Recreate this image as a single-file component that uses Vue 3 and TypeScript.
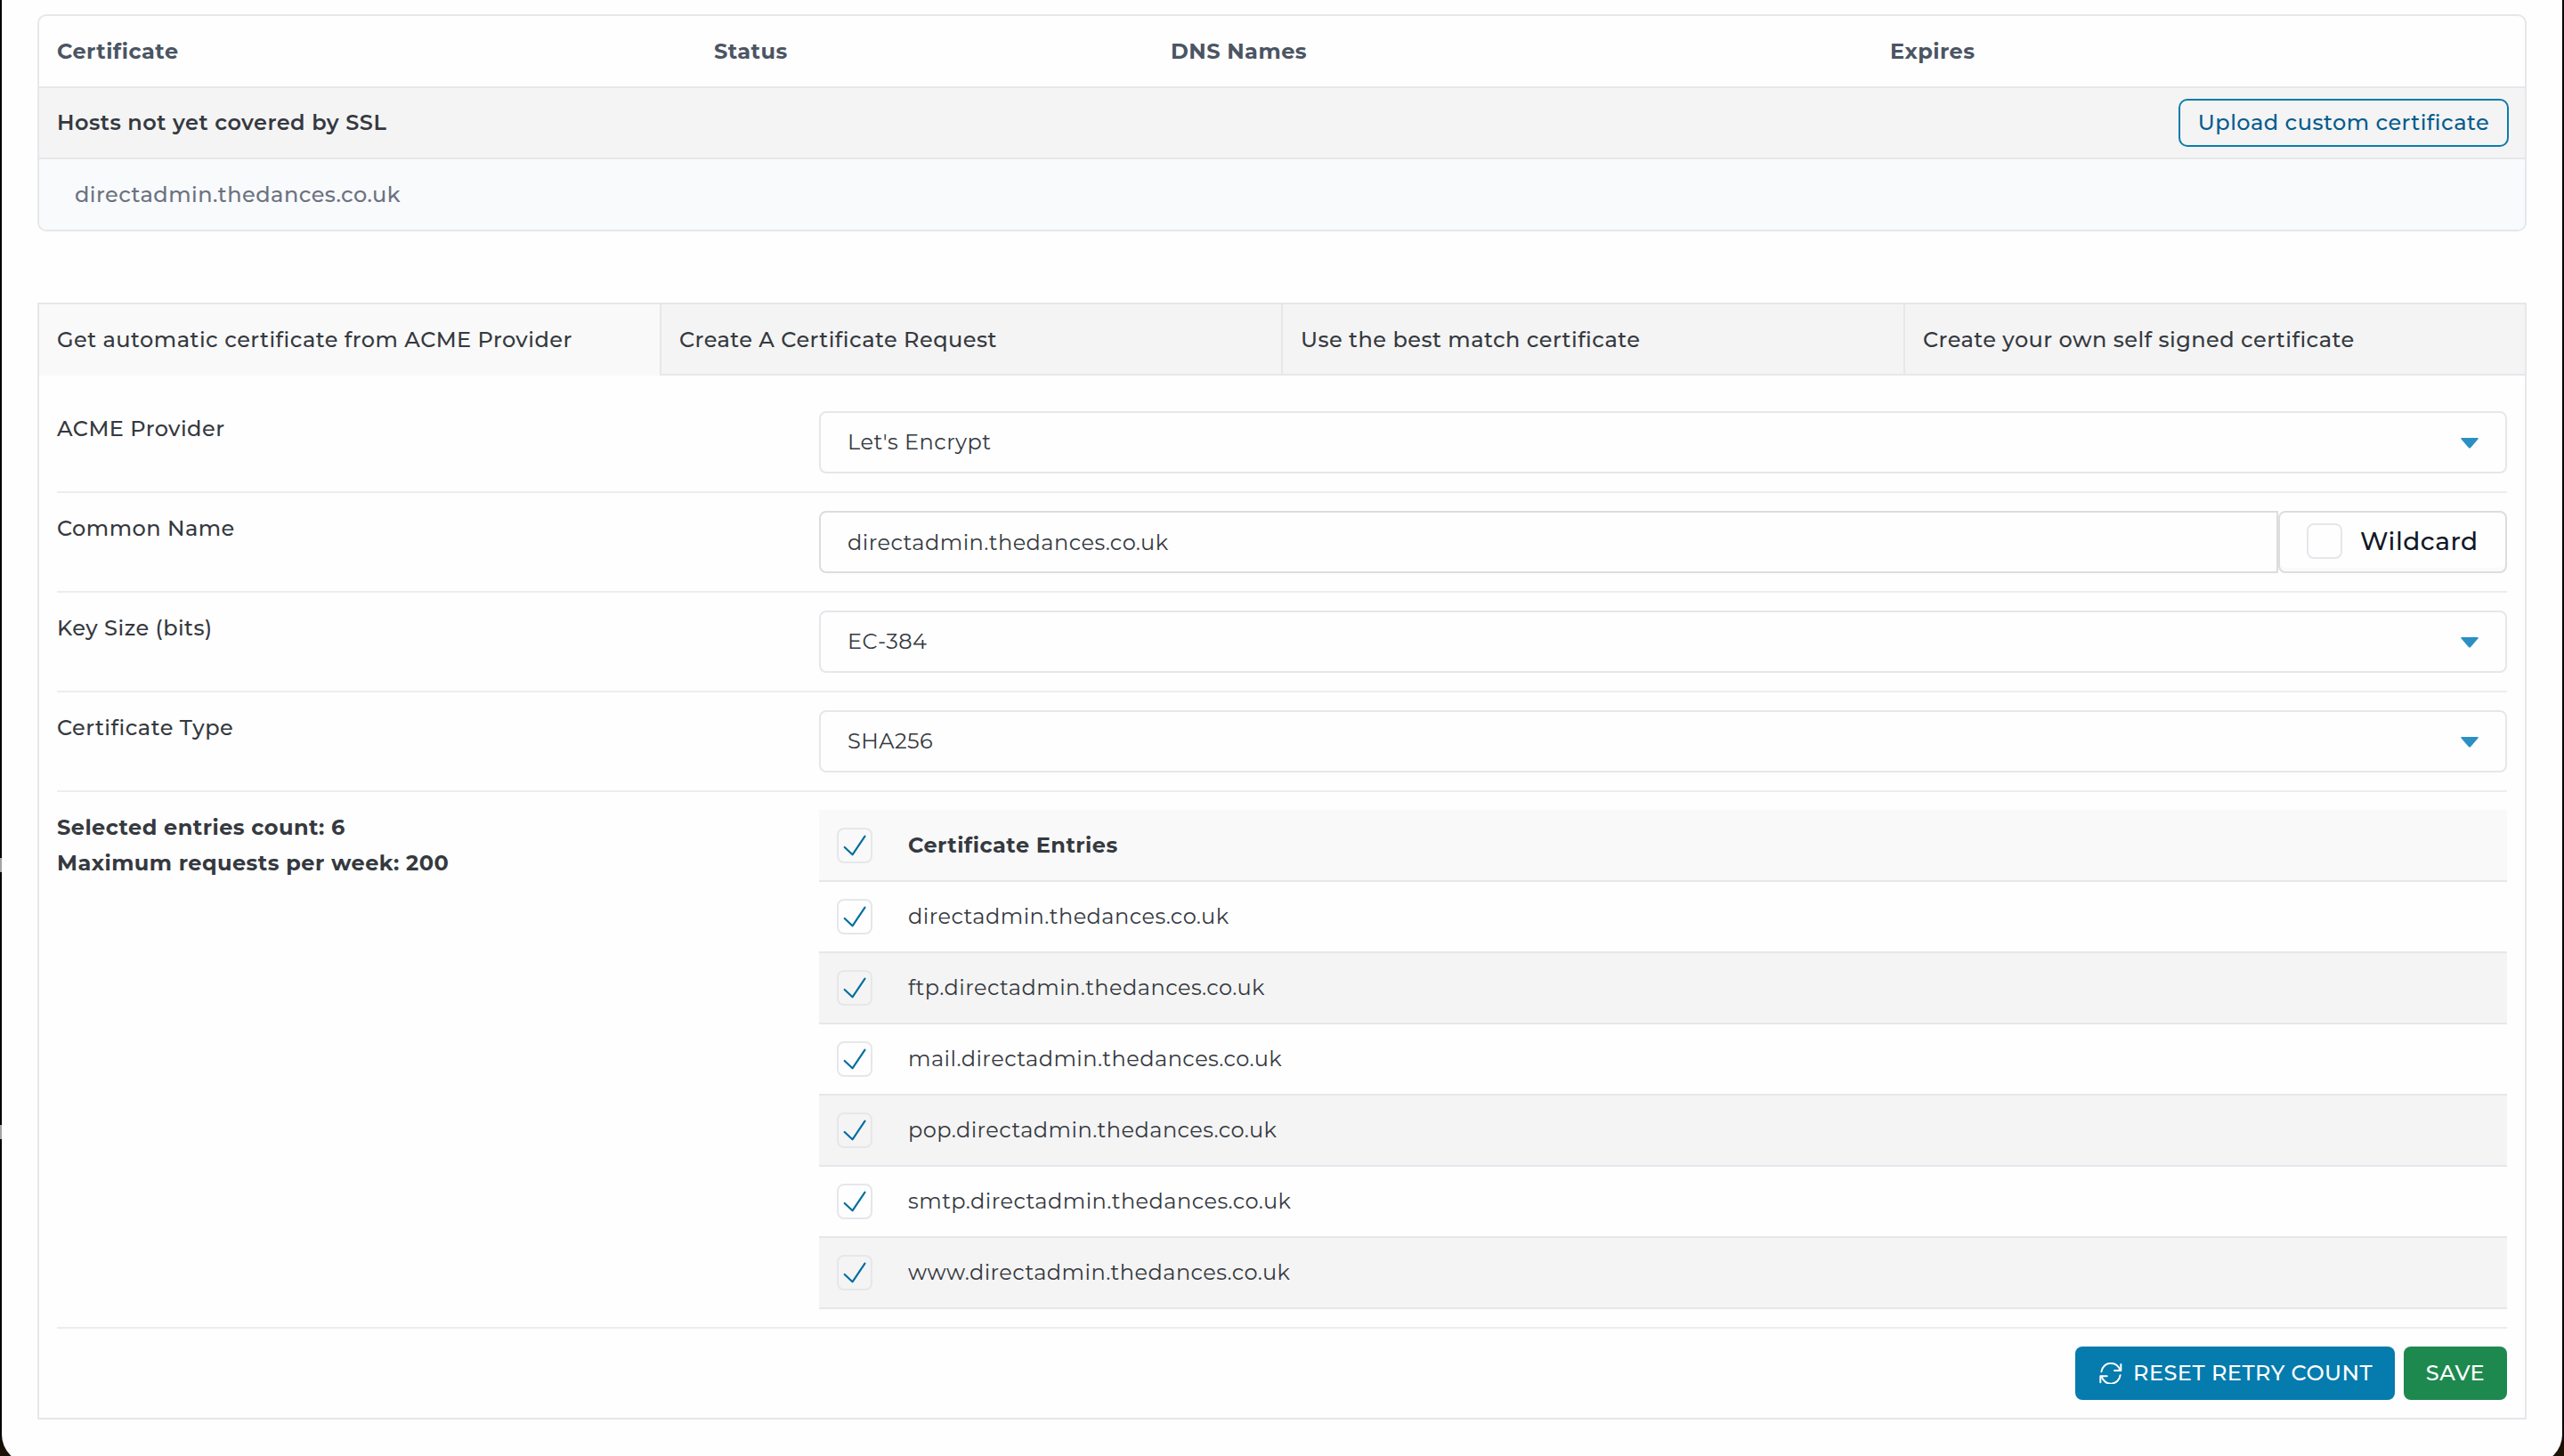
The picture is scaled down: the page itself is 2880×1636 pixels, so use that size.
<script setup lang="ts">
import { ref, computed } from 'vue'

interface Entry {
  host: string
  checked: boolean
}

const columns = ['Certificate', 'Status', 'DNS Names', 'Expires']
const uncoveredHosts = ['directadmin.thedances.co.uk']

const tabs = [
  'Get automatic certificate from ACME Provider',
  'Create A Certificate Request',
  'Use the best match certificate',
  'Create your own self signed certificate',
]
const activeTab = ref(0)

const provider = ref("Let's Encrypt")
const commonName = ref('directadmin.thedances.co.uk')
const keySize = ref('EC-384')
const certificateType = ref('SHA256')
const maxRequests = 200

const entries = ref<Entry[]>(
  ['', 'ftp.', 'mail.', 'pop.', 'smtp.', 'www.'].map((prefix) => ({
    host: `${prefix}directadmin.thedances.co.uk`,
    checked: true,
  })),
)
const selectedCount = computed(() => entries.value.filter((e) => e.checked).length)
</script>

<template>
  <div class="backdrop">
    <i class="notch notch-a"></i>
    <i class="notch notch-b"></i>
    <main class="window">
      <section class="hosts">
        <div class="hosts-head">
          <span v-for="c in columns" :key="c">{{ c }}</span>
        </div>
        <div class="hosts-group">
          <span>Hosts not yet covered by SSL</span>
          <button class="upload" type="button">Upload custom certificate</button>
        </div>
        <div v-for="h in uncoveredHosts" :key="h" class="hosts-row">{{ h }}</div>
      </section>

      <section class="panel">
        <nav class="tabs">
          <div
            v-for="(t, i) in tabs"
            :key="t"
            class="tab"
            :class="{ active: i === activeTab }"
            @click="activeTab = i"
          >
            {{ t }}
          </div>
        </nav>

        <div class="form">
          <div class="row">
            <div class="label">ACME Provider</div>
            <div class="control select">
              <span>{{ provider }}</span>
              <svg class="chevron" viewBox="0 0 20 12"><path d="M1 0h18q1.4.4.4 1.6l-8.200 9.400q-1.200 1-2.400 0L.6 1.600Q-.4.4 1 0z" /></svg>
            </div>
          </div>
          <div class="row">
            <div class="label">Common Name</div>
            <div class="control group">
              <div class="input">{{ commonName }}</div>
              <label class="wildcard">
                <span class="box"></span>
                <span>Wildcard</span>
              </label>
            </div>
          </div>
          <div class="row">
            <div class="label">Key Size (bits)</div>
            <div class="control select">
              <span>{{ keySize }}</span>
              <svg class="chevron" viewBox="0 0 20 12"><path d="M1 0h18q1.4.4.4 1.6l-8.200 9.400q-1.200 1-2.400 0L.6 1.600Q-.4.4 1 0z" /></svg>
            </div>
          </div>
          <div class="row">
            <div class="label">Certificate Type</div>
            <div class="control select">
              <span>{{ certificateType }}</span>
              <svg class="chevron" viewBox="0 0 20 12"><path d="M1 0h18q1.4.4.4 1.6l-8.200 9.400q-1.200 1-2.400 0L.6 1.600Q-.4.4 1 0z" /></svg>
            </div>
          </div>
          <div class="row">
            <div class="label counts">
              <div>Selected entries count: {{ selectedCount }}</div>
              <div>Maximum requests per week: {{ maxRequests }}</div>
            </div>
            <div class="entries">
              <div class="entry entry-head">
                <span class="box">
                  <svg viewBox="0 0 36 36"><path d="M6.700 20l8.800 8.300L29.500 7.700" /></svg>
                </span>
                <span>Certificate Entries</span>
              </div>
              <div v-for="e in entries" :key="e.host" class="entry">
                <span class="box" @click="e.checked = !e.checked">
                  <svg v-if="e.checked" viewBox="0 0 36 36"><path d="M6.700 20l8.800 8.300L29.500 7.700" /></svg>
                </span>
                <span>{{ e.host }}</span>
              </div>
            </div>
          </div>
          <div class="actions">
            <button class="btn reset" type="button">
              <svg class="refresh" viewBox="0 0 26 24">
                <path d="M2.400 10.200A10.700 10.700 0 0 1 23.400 8.800" />
                <path d="M24.300 2v7H17" />
                <path d="M23.600 14.200A10.700 10.700 0 0 1 2.600 15.600" />
                <path d="M1.300 22.300v-7H8.700" />
              </svg>
              <span>RESET RETRY COUNT</span>
            </button>
            <button class="btn save" type="button">SAVE</button>
          </div>
        </div>
      </section>
    </main>
  </div>
</template>

<style>
body {
  background: #0b0905;
}
</style>

<style scoped>
* {
  box-sizing: border-box;
}
.backdrop {
  position: relative;
  width: 2880px;
  height: 1636px;
  overflow: hidden;
  background: linear-gradient(to bottom, #000 1600px, #1d1307 1630px);
  font-family: Montserrat, Inter, sans-serif;
  font-size: 24px;
  font-weight: 500;
  letter-spacing: 0.48px;
  line-height: 40px;
  color: #35393f;
  white-space: nowrap;
}
.notch {
  position: absolute;
  left: 0;
  width: 2px;
  height: 16px;
  background: #a3a3a3;
}
.notch-a {
  top: 964px;
}
.notch-b {
  top: 1264px;
}
.window {
  height: 1644px;
  margin: 0 2px;
  padding: 16px 40px 0;
  border-radius: 0 0 32px 32px;
  background: #fefefe;
}
button {
  font: inherit;
  letter-spacing: inherit;
  cursor: pointer;
}

/* uncovered hosts table */
.hosts {
  height: 244px;
  border: 2px solid #e5e7eb;
  border-radius: 10px;
  overflow: hidden;
}
.hosts-head {
  display: grid;
  grid-template-columns: 738px 513px 808px 1fr;
  align-items: center;
  height: 81px;
  padding-left: 20px;
  border-bottom: 2px solid #e5e7eb;
  color: #4b5563;
  font-weight: 700;
}
.hosts-group {
  display: flex;
  align-items: center;
  justify-content: space-between;
  height: 80px;
  padding: 0 18px 0 20px;
  border-bottom: 2px solid #e5e7eb;
  background: #f4f4f4;
  font-weight: 600;
}
.upload {
  width: 371px;
  height: 54px;
  padding: 0;
  border: 2px solid #0a7cab;
  border-radius: 10px;
  background: transparent;
  color: #045c8f;
  font-weight: 500;
}
.hosts-row {
  height: 79px;
  padding-left: 40px;
  background: #f9fafc;
  color: #6b7280;
  line-height: 79px;
}

/* tabbed panel */
.panel {
  height: 1255px;
  margin-top: 80px;
  border: 2px solid #e5e7eb;
}
.tabs {
  display: grid;
  grid-template-columns: 697px 698px 699px 1fr;
  height: 80px;
}
.tab {
  height: 80px;
  padding-left: 20px;
  border-left: 2px solid #e5e7eb;
  border-bottom: 2px solid #e5e7eb;
  background: #f4f4f4;
  line-height: 80px;
}
.tab:first-child {
  border-left: 0;
}
.tab.active {
  border-bottom-color: #f9f9f9;
  background: #f9f9f9;
}

/* form */
.form {
  padding: 20px 20px 0;
}
.row {
  display: flex;
  padding: 20px 0;
  border-bottom: 2px solid #ededed;
}
.label {
  width: 856px;
}
.counts {
  font-weight: 700;
}
.control {
  flex: 1;
  height: 70px;
  font-weight: 400;
}
.select {
  display: flex;
  align-items: center;
  justify-content: space-between;
  padding: 0 30px;
  border: 2px solid #e5e7eb;
  border-radius: 8px;
}
.chevron {
  width: 20px;
  height: 12px;
  margin-top: 2px;
  fill: #2b8fc4;
}
.group {
  display: flex;
}
.input {
  flex: 1;
  padding-left: 30px;
  border: 2px solid #dddddd;
  border-radius: 8px 0 0 8px;
  line-height: 68px;
}
.wildcard {
  display: flex;
  align-items: center;
  gap: 20px;
  width: 257px;
  padding-left: 30px;
  border: 2px solid #dddddd;
  border-radius: 8px;
  box-shadow: inset 0 -4px 0 #f8fafc;
  color: #111827;
  font-size: 28px;
  font-weight: 500;
}
.wildcard .box {
  margin-top: -2px;
}
.wildcard span:last-child {
  margin-top: -3px;
}
.box {
  display: block;
  flex: none;
  width: 40px;
  height: 40px;
  border: 2px solid #e5e7eb;
  border-radius: 8px;
}
.box svg {
  display: block;
  width: 36px;
  height: 36px;
  fill: none;
  stroke: #036ea0;
  stroke-width: 2.2;
  stroke-linecap: round;
  stroke-linejoin: round;
}
.entries {
  flex: 1;
}
.entry {
  display: flex;
  align-items: center;
  gap: 40px;
  height: 80px;
  padding-left: 20px;
  border-bottom: 2px solid #e5e7eb;
  font-weight: 400;
}
.entry:nth-child(odd) {
  background: #f4f4f4;
}
.entry.entry-head {
  height: 81px;
  padding-top: 1px;
  background: #f9f9f9;
  font-weight: 700;
}
.actions {
  display: flex;
  justify-content: flex-end;
  gap: 10px;
  padding-top: 20px;
}
.btn {
  display: flex;
  align-items: center;
  justify-content: center;
  height: 60px;
  padding: 0;
  border: 0;
  border-radius: 8px;
  color: #fff;
}
.reset {
  justify-content: flex-start;
  gap: 12px;
  width: 359px;
  padding-left: 27px;
  background: #067bae;
}
.save {
  width: 116px;
  background: #1e894f;
}
.refresh {
  width: 26px;
  height: 24px;
  fill: none;
  stroke: #fff;
  stroke-width: 2;
  stroke-linecap: round;
  stroke-linejoin: round;
}
</style>
